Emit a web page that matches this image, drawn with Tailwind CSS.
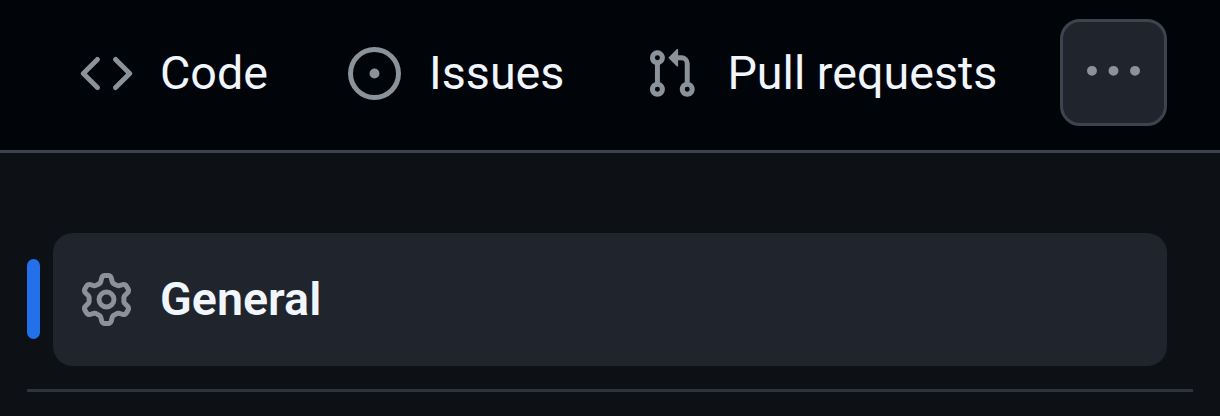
<!DOCTYPE html>
<html>
<head>
    <title>Repository navigation</title>
    <script src="https://cdn.jsdelivr.net/npm/@tailwindcss/browser@4"></script>
</head>
<body class="bg-[#0d1116] font-['Roboto',sans-serif] text-[#f0f6fc] overflow-hidden">
    <div class="w-[1220px] h-[416px] flex flex-col">
        <!-- top tabs -->
        <nav class="h-[153px] shrink-0 bg-[#010409] border-b-[3px] border-[#3d444d] flex items-center pl-[80px] pb-[4px]">
            <svg class="w-[53px] h-[53px] fill-[#8b929a] shrink-0" viewBox="0 0 16 16"><path d="m11.28 3.22 4.25 4.25a.75.75 0 0 1 0 1.06l-4.25 4.25a.749.749 0 0 1-1.275-.326.749.749 0 0 1 .215-.734L13.94 8l-3.72-3.72a.749.749 0 0 1 .326-1.275.749.749 0 0 1 .734.215Zm-6.56 0a.751.751 0 0 1 1.042.018.751.751 0 0 1 .018 1.042L2.06 8l3.72 3.72a.749.749 0 0 1-.326 1.275.749.749 0 0 1-.734-.215L.47 8.53a.75.75 0 0 1 0-1.06Z"/></svg>
            <span class="ml-[27px] text-[46.67px] leading-none">Code</span>
            <svg class="ml-[80px] w-[53px] h-[53px] fill-[#8b929a] shrink-0" viewBox="0 0 16 16"><path d="M8 9.5a1.5 1.5 0 1 0 0-3 1.5 1.5 0 0 0 0 3Z"/><path d="M8 0a8 8 0 1 1 0 16A8 8 0 0 1 8 0ZM1.5 8a6.5 6.5 0 1 0 13 0 6.5 6.5 0 0 0-13 0Z"/></svg>
            <span class="ml-[28px] text-[46.67px] leading-none">Issues</span>
            <svg class="ml-[81px] w-[53px] h-[53px] fill-[#8b929a] shrink-0" viewBox="0 0 16 16"><path d="M1.5 3.25a2.25 2.25 0 1 1 3 2.122v5.256a2.251 2.251 0 1 1-1.5 0V5.372A2.25 2.25 0 0 1 1.5 3.25Zm5.677-.177L9.573.677A.25.25 0 0 1 10 .854V2.5h1A2.5 2.5 0 0 1 13.5 5v5.628a2.251 2.251 0 1 1-1.5 0V5a1 1 0 0 0-1-1h-1v1.646a.25.25 0 0 1-.427.177L7.177 3.427a.25.25 0 0 1 0-.354ZM3.75 2.5a.75.75 0 1 0 0 1.5.75.75 0 0 0 0-1.5Zm0 9.5a.75.75 0 1 0 0 1.5.75.75 0 0 0 0-1.5Zm8.25.75a.75.75 0 1 0 1.5 0 .75.75 0 0 0-1.5 0Z"/></svg>
            <span class="ml-[29px] text-[46.67px] leading-none">Pull requests</span>
            <button class="ml-[63px] mb-[2px] w-[107px] h-[107px] shrink-0 rounded-[20px] bg-[#20252d] border-[3px] border-[#3d444d] flex items-center justify-center">
                <svg class="w-[53px] h-[53px] fill-[#8b929a] mt-[1px]" viewBox="0 0 16 16"><path d="M8 9a1.5 1.5 0 1 0 0-3 1.5 1.5 0 0 0 0 3ZM1.5 9a1.5 1.5 0 1 0 0-3 1.5 1.5 0 0 0 0 3Zm13 0a1.5 1.5 0 1 0 0-3 1.5 1.5 0 0 0 0 3Z"/></svg>
            </button>
        </nav>
        <!-- side list -->
        <div class="pt-[80px] pl-[27px] pr-[27px]">
            <div class="flex items-center h-[133px]">
                <div class="w-[13px] h-[80px] mb-[2px] rounded-full bg-[#2370eb] shrink-0"></div>
                <div class="ml-[13px] mr-[26px] flex-1 h-[133px] rounded-[20px] bg-[#20252d] flex items-center pl-[27px]">
                    <svg class="w-[53px] h-[53px] fill-[#8b929a] shrink-0" viewBox="0 0 16 16"><path d="M8 0a8.2 8.2 0 0 1 .701.031C9.444.095 9.99.645 10.16 1.29l.288 1.107c.018.066.079.158.212.224.231.114.454.243.668.386.123.082.233.09.299.071l1.103-.303c.644-.176 1.392.021 1.82.63.27.385.506.792.704 1.218.315.675.111 1.422-.364 1.891l-.814.806c-.049.048-.098.147-.088.294.016.257.016.515 0 .772-.01.147.038.246.088.294l.814.806c.475.469.679 1.216.364 1.891a7.977 7.977 0 0 1-.704 1.217c-.428.61-1.176.807-1.82.63l-1.102-.302c-.067-.019-.177-.011-.3.071a5.909 5.909 0 0 1-.668.386c-.133.066-.194.158-.211.224l-.29 1.106c-.168.646-.715 1.196-1.458 1.26a8.006 8.006 0 0 1-1.402 0c-.743-.064-1.289-.614-1.458-1.26l-.289-1.106c-.018-.066-.079-.158-.212-.224a5.738 5.738 0 0 1-.668-.386c-.123-.082-.233-.09-.299-.071l-1.103.303c-.644.176-1.392-.021-1.82-.63a8.12 8.12 0 0 1-.704-1.218c-.315-.675-.111-1.422.363-1.891l.815-.806c.05-.048.098-.147.088-.294a6.214 6.214 0 0 1 0-.772c.01-.147-.038-.246-.088-.294l-.815-.806C.635 6.045.431 5.298.746 4.623a7.92 7.92 0 0 1 .704-1.217c.428-.61 1.176-.807 1.82-.63l1.102.302c.067.019.177.011.3-.071.214-.143.437-.272.668-.386.133-.066.194-.158.211-.224l.29-1.106C6.009.645 6.556.095 7.299.03 7.53.01 7.764 0 8 0Zm-.571 1.525c-.036.003-.108.036-.137.146l-.289 1.105c-.147.561-.549.967-.998 1.189-.173.086-.34.183-.5.29-.417.278-.97.423-1.529.27l-1.103-.303c-.109-.03-.175.016-.195.045-.22.312-.412.644-.573.99-.014.031-.021.11.059.19l.815.806c.411.406.562.957.53 1.456a4.709 4.709 0 0 0 0 .582c.032.499-.119 1.05-.53 1.456l-.815.806c-.081.08-.073.159-.059.19.162.346.353.677.573.989.02.03.085.076.195.046l1.102-.303c.56-.153 1.113-.008 1.53.27.161.107.328.204.501.29.447.222.85.629.997 1.189l.289 1.105c.029.109.101.143.137.146a6.6 6.6 0 0 0 1.142 0c.036-.003.108-.036.137-.146l.289-1.105c.147-.561.549-.967.998-1.189.173-.086.34-.183.5-.29.417-.278.97-.423 1.529-.27l1.103.303c.109.029.175-.016.195-.045.22-.313.411-.644.573-.99.014-.031.021-.11-.059-.19l-.815-.806c-.411-.406-.562-.957-.53-1.456a4.709 4.709 0 0 0 0-.582c-.032-.499.119-1.05.53-1.456l.815-.806c.081-.08.073-.159.059-.19a6.464 6.464 0 0 0-.573-.989c-.02-.03-.085-.076-.195-.046l-1.102.303c-.56.153-1.113.008-1.53-.27a4.44 4.44 0 0 0-.501-.29c-.447-.222-.85-.629-.997-1.189l-.289-1.105c-.029-.11-.101-.143-.137-.146a6.6 6.6 0 0 0-1.142 0ZM11 8a3 3 0 1 1-6 0 3 3 0 0 1 6 0ZM9.5 8a1.5 1.5 0 1 0-3.001.001A1.5 1.5 0 0 0 9.5 8Z"/></svg>
                    <span class="ml-[27px] text-[46.67px] leading-none font-semibold">General</span>
                </div>
            </div>
            <div class="mt-[23px] h-[3px] bg-[#2f343b]"></div>
        </div>
    </div>
</body>
</html>
